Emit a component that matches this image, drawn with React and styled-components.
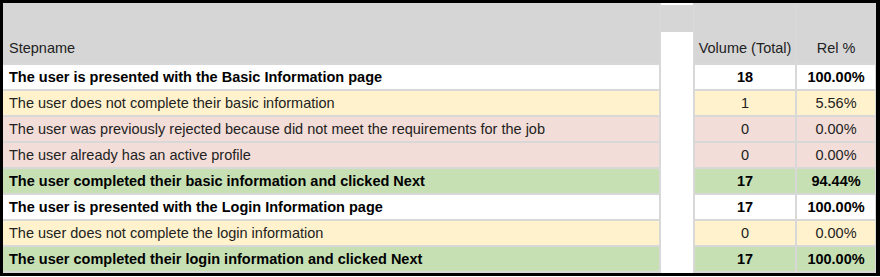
import React from "react"
import styled, { createGlobalStyle } from "styled-components"

const GlobalStyle = createGlobalStyle`
  body {
    margin: 0;
    background: #ffffff;
    font-family: "Liberation Sans", Arial, sans-serif;
  }
`

const ROW_COLORS = {
  white: "#ffffff",
  yellow: "#fff2cc",
  pink: "#f2ddd8",
  green: "#c6e0b4",
}

const Frame = styled.div`
  box-sizing: border-box;
  width: 880px;
  height: 276px;
  border-style: solid;
  border-color: #000000;
  border-width: 3px 4px 3px 3px;
  background: #d8d8d8;
  padding-bottom: 2px;
  display: grid;
  grid-template-columns: 656px 32px 100px 78px;
  grid-template-rows: 60px repeat(8, 24px);
  column-gap: 2px;
  row-gap: 2px;
`

const HeadCell = styled.div`
  display: flex;
  align-items: flex-end;
  justify-content: ${(p) => (p.$center ? "center" : "flex-start")};
  padding: 0 ${(p) => (p.$center ? "0" : "6px")} 7px;
  font-size: 14.5px;
  color: #222222;
  background: #d6d6d6;
  white-space: nowrap;
`

const Spacer = styled.div`
  grid-column: 2;
  grid-row: 1 / span 9;
  display: flex;
  flex-direction: column;
  background: #d6d6d6;
  margin-bottom: -2px;
`

const SpacerStub = styled.div`
  height: 2px;
  background: #ffffff;
`

const SpacerFill = styled.div`
  flex: 1;
  margin-top: 27px;
  background: #ffffff;
`

const Cell = styled.div`
  display: flex;
  align-items: center;
  justify-content: ${(p) => (p.$center ? "center" : "flex-start")};
  padding: 0 ${(p) => (p.$center ? "0" : "6px")};
  font-size: 14.5px;
  font-weight: ${(p) => (p.$bold ? 700 : 400)};
  color: ${(p) => (p.$bold ? "#000000" : "#222222")};
  background: ${(p) => ROW_COLORS[p.$tone]};
  white-space: nowrap;
  overflow: hidden;
`

const rows = [
  { name: "The user is presented with the Basic Information page", volume: "18", rel: "100.00%", tone: "white", bold: true },
  { name: "The user does not complete their basic information", volume: "1", rel: "5.56%", tone: "yellow" },
  { name: "The user was previously rejected because did not meet the requirements for the job", volume: "0", rel: "0.00%", tone: "pink" },
  { name: "The user already has an active profile", volume: "0", rel: "0.00%", tone: "pink" },
  { name: "The user completed their basic information and clicked Next", volume: "17", rel: "94.44%", tone: "green", bold: true },
  { name: "The user is presented with the Login Information page", volume: "17", rel: "100.00%", tone: "white", bold: true },
  { name: "The user does not complete the login information", volume: "0", rel: "0.00%", tone: "yellow" },
  { name: "The user completed their login information and clicked Next", volume: "17", rel: "100.00%", tone: "green", bold: true },
]

function App() {
  return (
    <>
      <GlobalStyle />
      <Frame>
        <HeadCell>Stepname</HeadCell>
        <Spacer>
          <SpacerStub />
          <SpacerFill />
        </Spacer>
        <HeadCell $center>Volume (Total)</HeadCell>
        <HeadCell $center>Rel %</HeadCell>
        {rows.map((row, index) => (
          <React.Fragment key={index}>
            <Cell $tone={row.tone} $bold={row.bold} style={{ gridRow: index + 2, gridColumn: 1 }}>
              {row.name}
            </Cell>
            <Cell $tone={row.tone} $bold={row.bold} $center style={{ gridRow: index + 2, gridColumn: 3 }}>
              {row.volume}
            </Cell>
            <Cell $tone={row.tone} $bold={row.bold} $center style={{ gridRow: index + 2, gridColumn: 4 }}>
              {row.rel}
            </Cell>
          </React.Fragment>
        ))}
      </Frame>
    </>
  )
}

export default App
